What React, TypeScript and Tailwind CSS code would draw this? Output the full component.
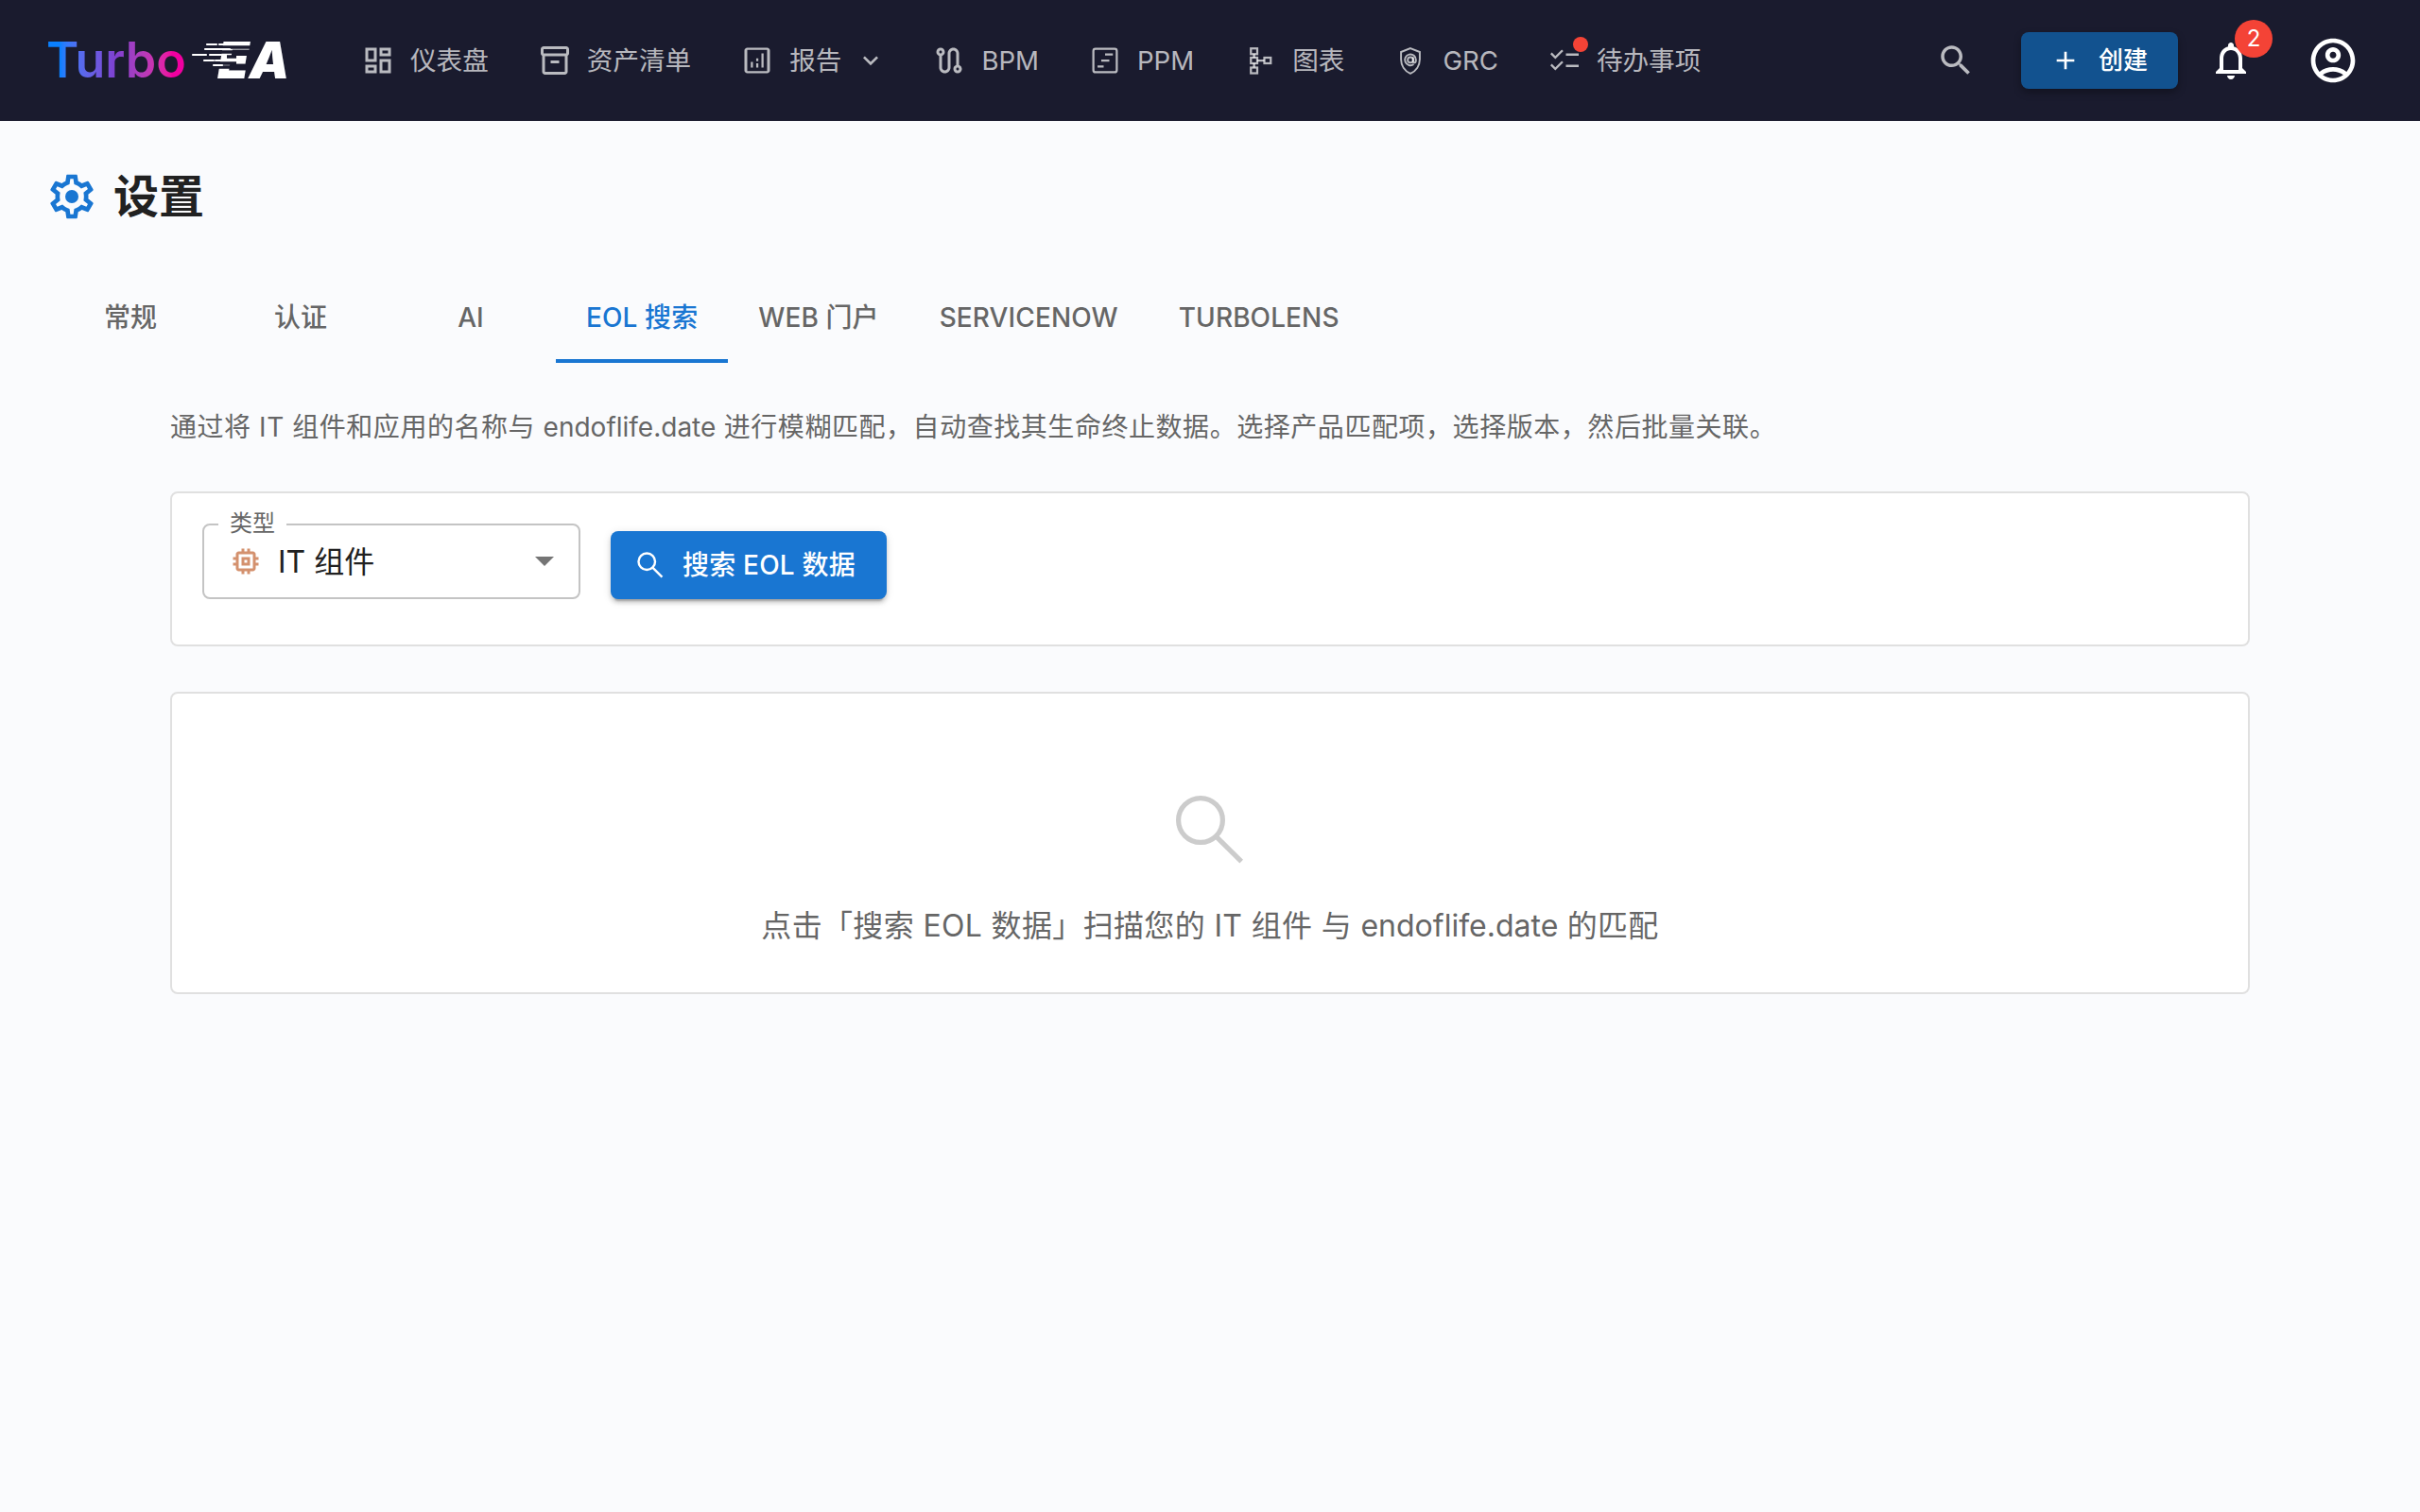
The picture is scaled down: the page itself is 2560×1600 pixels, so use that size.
import { ReactNode } from 'react'

const SearchPath = 'M15.5 14h-.79l-.28-.27C15.41 12.59 16 11.11 16 9.5 16 5.91 13.09 3 9.5 3S3 5.91 3 9.5 5.91 16 9.5 16c1.61 0 3.09-.59 4.23-1.57l.27.28v.79l5 4.99L20.49 19l-4.99-5zm-6 0C7.01 14 5 11.99 5 9.5S7.01 5 9.5 5 14 7.01 14 9.5 11.99 14 9.5 14z'

const Icon = ({ d, className }: { d: string; className: string }) => (
  <svg viewBox="0 0 24 24" fill="currentColor" className={className}>
    <path d={d} />
  </svg>
)

// thinner magnifier used in the panels
const ThinSearch = ({ weight, className }: { weight: number; className: string }) => (
  <svg viewBox="0 0 24 24" fill="none" stroke="currentColor" strokeWidth={weight} className={className}>
    <circle cx="9.5" cy="9.5" r="5.85" />
    <path d="M13.6 13.8 20.3 20.4" />
  </svg>
)

const navIcon = 'w-9 h-9 shrink-0'

const DashboardIcon = () => (
  <Icon className={navIcon} d="M19 5v2h-4V5h4M9 5v6H5V5h4m10 8v6h-4v-6h4M9 17v2H5v-2h4M21 3h-8v6h8V3zM11 3H3v10h8V3zm10 8h-8v10h8V11zm-10 4H3v6h8v-6z" />
)

const InventoryIcon = () => (
  <Icon className={navIcon} d="M20 2H4c-1 0-2 .9-2 2v3.01c0 .72.43 1.34 1 1.69V20c0 1.1 1.1 2 2 2h14c.9 0 2-.9 2-2V8.7c.57-.35 1-.97 1-1.69V4c0-1.1-1-2-2-2zm-1 18H5V9h14v11zm1-13H4V4h16v3zM9 12h6v2H9z" />
)

const ReportIcon = () => (
  <Icon className={navIcon} d="M19 3H5c-1.1 0-2 .9-2 2v14c0 1.1.9 2 2 2h14c1.1 0 2-.9 2-2V5c0-1.1-.9-2-2-2zm0 16.5H5V4.5h14v15zM7.5 13H9v4H7.5zm7.5-6h1.5v10H15zm-3.7 7h1.5v3h-1.5zm0-3.5h1.5v2h-1.5z" />
)

const RouteIcon = () => (
  <Icon className={navIcon} d="M19 15.18V7c0-2.21-1.79-4-4-4s-4 1.79-4 4v10c0 1.1-.9 2-2 2s-2-.9-2-2V8.82C8.16 8.4 9 7.3 9 6c0-1.66-1.34-3-3-3S3 4.34 3 6c0 1.3.84 2.4 2 2.82V17c0 2.21 1.79 4 4 4s4-1.79 4-4V7c0-1.1.9-2 2-2s2 .9 2 2v8.18c-1.16.41-2 1.51-2 2.82 0 1.66 1.34 3 3 3s3-1.34 3-3c0-1.3-.84-2.4-2-2.82zM6 7c-.55 0-1-.45-1-1s.45-1 1-1 1 .45 1 1-.45 1-1 1zm12 12c-.55 0-1-.45-1-1s.45-1 1-1 1 .45 1 1-.45 1-1 1z" />
)

const TimelineIcon = () => (
  <svg viewBox="0 0 24 24" fill="none" stroke="currentColor" strokeWidth="1.5" className={navIcon}>
    <rect x="3.75" y="3.75" width="16.5" height="16.5" rx="1.5" />
    <path d="M12 7.75h5.5M9.3 12h5.7M6.7 16.25h4.3" />
  </svg>
)

const TreeIcon = () => (
  <svg viewBox="0 0 24 24" fill="none" stroke="currentColor" strokeWidth="1.5" className={navIcon}>
    <rect x="5.5" y="3.5" width="4.5" height="4" />
    <rect x="5.5" y="10" width="4.5" height="4" />
    <rect x="5.5" y="17" width="4.5" height="4" />
    <rect x="15" y="10" width="4.5" height="4" />
    <path d="M7.75 7.5V10M7.75 14v3M10 12h5" />
  </svg>
)

const ShieldIcon = () => (
  <svg viewBox="0 0 24 24" fill="none" stroke="currentColor" strokeWidth="1.3" className={navIcon}>
    <path d="M12 3.4 18.6 6v5.2c0 4.6-2.7 8.4-6.6 10-3.9-1.6-6.6-5.4-6.6-10V6z" />
    <circle cx="12" cy="11.6" r="1.9" />
    <path d="M15.9 11.6a3.9 3.9 0 1 0-1.6 3.1M13.9 9.6v3c0 1.5 2 1.5 2-1" />
  </svg>
)

const ChecklistIcon = () => (
  <Icon className={navIcon} d="M22 7h-9v1.6h9V7zm0 8h-9v1.6h9V15zM5.54 11 2 7.46l1.1-1.1 2.44 2.44 4.55-4.55 1.1 1.1L5.54 11zm0 8L2 15.46l1.1-1.1 2.44 2.44 4.55-4.55 1.1 1.1L5.54 19z" />
)

const NavItem = ({ icon, label, children }: { icon: ReactNode; label: string; children?: ReactNode }) => (
  <div className="flex items-center gap-4 px-6 text-[27.6px] leading-[40px] text-white/70 relative whitespace-nowrap">
    {icon}
    <span>{label}</span>
    {children}
  </div>
)

const Logo = () => (
  <div className="relative flex items-center w-[256px] h-[60px]">
    <span className="-ml-[1px] text-[52px] leading-[60px] font-semibold bg-linear-to-r from-[#0a80ff] from-10% via-[#7f3fd0] via-50% to-[#f000a0] to-90% bg-clip-text text-transparent">
      Turbo
    </span>
    <span className="absolute left-[180px] top-0 text-[54px] leading-[60px] font-black italic text-white">EA</span>
    {/* speed lines over the E */}
    <svg viewBox="0 0 70 40" className="absolute left-[152px] top-[10px] w-[70px] h-[40px]">
      <path d="M27 6h40M14 11h30M38 16h10M14 23h34M24 27h22" stroke="#1a1b2e" strokeWidth="3.4" fill="none" />
      <path d="M17 3h10M30 3h12M15 8h26M2 14h14M20 14h12M14 20h10M26 20h14M24 25h9" stroke="#fff" strokeWidth="2.2" strokeLinecap="round" fill="none" />
    </svg>
  </div>
)

const Tab = ({ label, active }: { label: string; active?: boolean }) => (
  <div
    className={`min-w-[180px] h-[96px] px-8 flex items-center justify-center text-[28px] leading-[40px] font-medium tracking-[0.1px] whitespace-nowrap border-b-4 pt-[4px] ${
      active ? 'text-[#1976d2] border-[#1976d2]' : 'text-[#666666] border-transparent'
    }`}
  >
    {label}
  </div>
)

export default function App() {
  return (
    <div className="min-h-[1600px] bg-[#fafbfd] font-['Inter','Noto_Sans_CJK_SC',sans-serif]">
      {/* Top bar */}
      <header className="h-[128px] bg-[#1a1b2e] flex items-center pl-[50px] pr-[64px]">
        <Logo />
        <nav className="flex items-center gap-1 ml-[52px]">
          <NavItem icon={<DashboardIcon />} label="仪表盘" />
          <NavItem icon={<InventoryIcon />} label="资产清单" />
          <NavItem icon={<ReportIcon />} label="报告">
            <Icon className="w-8 h-8 -ml-[1px] -mr-[3px]" d="M7.41 8.59 12 13.17l4.59-4.58L18 10l-6 6-6-6 1.41-1.41z" />
          </NavItem>
          <NavItem icon={<RouteIcon />} label="BPM" />
          <NavItem icon={<TimelineIcon />} label="PPM" />
          <NavItem icon={<TreeIcon />} label="图表" />
          <NavItem icon={<ShieldIcon />} label="GRC" />
          <NavItem
            icon={
              <span className="relative">
                <ChecklistIcon />
                <span className="absolute left-[27px] -top-[7px] w-4 h-4 rounded-full bg-[#f44336]" />
              </span>
            }
            label="待办事项"
          />
        </nav>
        <div className="ml-auto flex items-center">
          <Icon className="w-[42px] h-[42px] text-white/70 translate-x-[1px]" d={SearchPath} />
          <button className="ml-[49px] h-[60px] w-[166px] rounded-lg bg-[#12528f] text-white flex items-center pl-[31px] gap-[19px] text-[26px] leading-[36px] font-medium shadow-[0_4px_8px_rgba(0,0,0,0.3)]">
            <Icon className="w-8 h-8" d="M19 13h-6v6h-2v-6H5v-2h6V5h2v6h6v2z" />
            创建
          </button>
          <div className="relative ml-8 text-white">
            <Icon
              className="w-12 h-12"
              d="M12 22c1.1 0 2-.9 2-2h-4c0 1.1.9 2 2 2zm6-6v-5c0-3.07-1.63-5.64-4.5-6.32V4c0-.83-.67-1.5-1.5-1.5s-1.5.67-1.5 1.5v.68C7.64 5.36 6 7.92 6 11v5l-2 2v1h16v-1l-2-2zm-2 1H8v-6c0-2.48 1.51-4.5 4-4.5s4 2.02 4 4.5v6z"
            />
            <span className="absolute left-[28px] -top-[19px] w-10 h-10 rounded-full bg-[#f44336] flex items-center justify-center text-[24px] leading-none">
              2
            </span>
          </div>
          <Icon
            className="ml-14 w-14 h-14 text-white"
            d="M12 2C6.48 2 2 6.48 2 12s4.48 10 10 10 10-4.48 10-10S17.52 2 12 2zM7.35 18.5C8.66 17.56 10.26 17 12 17s3.34.56 4.65 1.5c-1.31.94-2.91 1.5-4.65 1.5s-3.34-.56-4.65-1.5zm10.79-1.38C16.45 15.8 14.32 15 12 15s-4.45.8-6.14 2.12C4.7 15.73 4 13.95 4 12c0-4.42 3.58-8 8-8s8 3.58 8 8c0 1.95-.7 3.73-1.86 5.12zM12 6c-1.93 0-3.5 1.57-3.5 3.5S10.07 13 12 13s3.5-1.57 3.5-3.5S13.93 6 12 6zm0 5c-.83 0-1.5-.67-1.5-1.5S11.17 8 12 8s1.5.67 1.5 1.5S12.83 11 12 11z"
          />
        </div>
      </header>

      <main className="px-12">
        {/* Page title */}
        <div className="flex items-center gap-4 h-[160px]">
          <svg viewBox="0 0 24 24" fill="currentColor" className="w-14 h-14 text-[#1976d2]">
            <path d="M19.43 12.98c.04-.32.07-.64.07-.98 0-.34-.03-.66-.07-.98l2.11-1.65c.19-.15.24-.42.12-.64l-2-3.46c-.09-.16-.26-.25-.44-.25-.06 0-.12.01-.17.03l-2.49 1c-.52-.4-1.08-.73-1.69-.98l-.38-2.65C14.46 2.18 14.25 2 14 2h-4c-.25 0-.46.18-.49.42l-.38 2.65c-.61.25-1.17.59-1.69.98l-2.49-1c-.06-.02-.12-.03-.18-.03-.17 0-.34.09-.43.25l-2 3.46c-.13.22-.07.49.12.64l2.11 1.65c-.04.32-.07.65-.07.98 0 .33.03.66.07.98l-2.11 1.65c-.19.15-.24.42-.12.64l2 3.46c.09.16.26.25.44.25.06 0 .12-.01.17-.03l2.49-1c.52.4 1.08.73 1.69.98l.38 2.65c.03.24.24.42.49.42h4c.25 0 .46-.18.49-.42l.38-2.65c.61-.25 1.17-.59 1.69-.98l2.49 1c.06.02.12.03.18.03.17 0 .34-.09.43-.25l2-3.46c.12-.22.07-.49-.12-.64l-2.11-1.65zm-1.98-1.71c.04.31.05.52.05.73 0 .21-.02.43-.05.73l-.14 1.13.89.7 1.08.84-.7 1.21-1.27-.51-1.04-.42-.9.68c-.43.32-.84.56-1.25.73l-1.06.43-.16 1.13-.2 1.35h-1.4l-.19-1.35-.16-1.13-1.06-.43c-.43-.18-.83-.41-1.23-.71l-.91-.7-1.06.43-1.27.51-.7-1.21 1.08-.84.89-.7-.14-1.13c-.03-.31-.05-.54-.05-.74s.02-.43.05-.73l.14-1.13-.89-.7-1.08-.84.7-1.21 1.27.51 1.04.42.9-.68c.43-.32.84-.56 1.25-.73l1.06-.43.16-1.13.2-1.35h1.39l.19 1.35.16 1.13 1.06.43c.43.18.83.41 1.23.71l.91.7 1.06-.43 1.27-.51.7 1.21-1.07.85-.89.7.14 1.13z" />
            <circle cx="12" cy="12" r="3" />
          </svg>
          <h1 className="text-[48px] leading-[56px] font-bold text-[#212121]">设置</h1>
        </div>

        {/* Tabs */}
        <div className="flex">
          <Tab label="常规" />
          <Tab label="认证" />
          <Tab label="AI" />
          <Tab label="EOL 搜索" active />
          <Tab label="WEB 门户" />
          <Tab label="SERVICENOW" />
          <Tab label="TURBOLENS" />
        </div>

        <section className="px-[132px] pt-12">
          <p className="text-[28px] leading-[40px] tracking-[0.55px] text-[#666666] mb-12">
            通过将 IT 组件和应用的名称与 <span className="tracking-normal">endoflife.date</span> 进行模糊匹配，自动查找其生命终止数据。选择产品匹配项，选择版本，然后批量关联。
          </p>

          {/* Filter card */}
          <div className="bg-white border-2 border-[#e0e0e0] rounded-lg pt-8 pb-12 px-8 mb-12 flex items-end gap-8">
            <div className="relative w-[400px] h-[80px] rounded-lg border-2 border-[#c4c4c4] flex items-center pl-[26px] pr-[26px]">
              <span className="absolute left-[15px] -top-[16px] bg-white px-3 text-[24px] leading-[28px] text-[#666666]">类型</span>
              <Icon
                className="w-9 h-9 text-[#d4916e]"
                d="M15 9H9v6h6V9zm-2 4h-2v-2h2v2zm8-2V9h-2V7c0-1.1-.9-2-2-2h-2V3h-2v2h-2V3H9v2H7c-1.1 0-2 .9-2 2v2H3v2h2v2H3v2h2v2c0 1.1.9 2 2 2h2v2h2v-2h2v2h2v-2h2c1.1 0 2-.9 2-2v-2h2v-2h-2v-2h2zm-4 6H7V7h10v10z"
              />
              <span className="ml-4 pt-[2px] text-[32px] leading-[48px] text-[#212121]">IT 组件</span>
              <span className="ml-auto w-0 h-0 border-x-[10px] border-x-transparent border-t-[10px] border-t-[#757575]" />
            </div>
            <button className="w-[292px] h-[72px] pl-6 rounded-lg bg-[#1976d2] text-white flex items-center gap-4 text-[28px] leading-[40px] font-medium tracking-[0.2px] whitespace-nowrap shadow-[0_6px_2px_-4px_rgba(0,0,0,0.2),0_4px_4px_0_rgba(0,0,0,0.14),0_2px_10px_0_rgba(0,0,0,0.12)]">
              <ThinSearch weight={1.6} className="w-9 h-9" />
              搜索 EOL 数据
            </button>
          </div>

          {/* Empty state */}
          <div className="bg-white border-2 border-[#e0e0e0] rounded-lg pt-[96px] pb-[46px] flex flex-col items-center">
            <ThinSearch weight={1.3} className="w-24 h-24 text-[#cccccc]" />
            <p className="mt-[30px] text-[32px] leading-[48px] tracking-[0.35px] text-[#666666]">
              点击「搜索 EOL 数据」扫描您的 IT 组件 与 <span className="tracking-normal">endoflife.date</span> 的匹配
            </p>
          </div>
        </section>
      </main>
    </div>
  )
}
